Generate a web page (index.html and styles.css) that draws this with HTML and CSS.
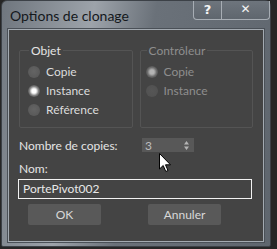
FILE: index.html
```html
<!DOCTYPE html>
<html lang="fr">
<head>
    <meta charset="UTF-8">
    <title>Options de clonage</title>
    <link rel="stylesheet" href="styles.css">
</head>
<body>
    <div class="window">
        <div class="titlebar">
            <div class="title">Options de clonage</div>
            <div class="caption-buttons">
                <div class="cap-btn help">?</div>
                <div class="cap-btn close">&#x2715;</div>
            </div>
        </div>
        <div class="client">
            <div class="groups">
                <fieldset class="group">
                    <legend>Objet</legend>
                    <div class="radio"><span class="dot"></span>Copie</div>
                    <div class="radio"><span class="dot checked"></span>Instance</div>
                    <div class="radio"><span class="dot"></span>Référence</div>
                </fieldset>
                <fieldset class="group disabled">
                    <legend>Contrôleur</legend>
                    <div class="radio"><span class="dot checked"></span>Copie</div>
                    <div class="radio"><span class="dot"></span>Instance</div>
                </fieldset>
            </div>
            <div class="copies-row">
                <span class="label">Nombre de copies:</span>
                <div class="spinner">
                    <span>3</span>
                    <svg width="5" height="9" viewBox="0 0 5 9"><path d="M2.5 0 L5 3.5 H0 Z M0 5.5 H5 L2.5 9 Z" fill="#b4b4b4"/></svg>
                </div>
            </div>
            <div class="label name-label">Nom:</div>
            <div class="name-input">PortePivot002</div>
            <div class="actions">
                <div class="btn">OK</div>
                <div class="btn">Annuler</div>
            </div>
        </div>
        <svg class="cursor" width="13" height="20" viewBox="0 0 13 20">
            <path d="M0.5 0.5 V16 L4.2 12.5 L6.8 18.5 L9 17.5 L6.5 11.8 H11.5 Z" fill="#fff" stroke="#000" stroke-width="1"/>
        </svg>
    </div>
</body>
</html>
```
FILE: styles.css
```css
* {
    box-sizing: border-box;
}

body {
    margin: 0;
    background-color: #262626;
    font-family: Lato, "Noto Sans", sans-serif;
    font-size: 12px;
    height: 249px;
    overflow: hidden;
}

.window {
    position: relative;
    margin-left: 1px;
    width: 270px;
    height: 247px;
    border: 1px solid #3c4147;
    border-radius: 6px 6px 2px 2px;
    background: linear-gradient(100deg, #6f767e 0%, #9da3aa 30%, #6a7179 50%, #5f666e 100%);
    padding: 0 6px 5px 6px;
}

.titlebar {
    display: flex;
    justify-content: space-between;
    height: 28px;
}

.title {
    padding: 6px 0 0 2px;
    font-size: 14px;
    color: #14181c;
}

.caption-buttons {
    display: flex;
    height: 19px;
    margin-right: -6px;
}

.cap-btn {
    height: 19px;
    border: 1px solid #a7adb4;
    border-top: none;
    background: linear-gradient(#6e757d, #5f666e);
    color: #f4f4f4;
    font-weight: bold;
    font-family: "DejaVu Sans", sans-serif;
    text-align: center;
    line-height: 17px;
}

.help {
    width: 29px;
    border-radius: 0 0 0 4px;
    font-size: 13px;
}

.close {
    width: 48px;
    border-left: none;
    border-radius: 0 0 4px 0;
    font-size: 12px;
}

.client {
    height: 213px;
    border: 1px solid #a3aab1;
    box-shadow: 0 0 0 1px #4a5057;
    background-color: #444444;
    color: #dcdcdc;
    padding: 13px 10px 0 10px;
}

.groups {
    display: flex;
    gap: 7px;
}

.group {
    width: 116px;
    height: 85px;
    margin: 0;
    padding: 4px 0 0 8px;
    border: 1px solid #545454;
    border-radius: 2px;
}

.group.disabled {
    padding-left: 5px;
}

.group legend {
    padding: 0 2px;
    margin-left: 1px;
    line-height: 15px;
    color: #e4e4e4;
}

.radio {
    display: flex;
    align-items: center;
    gap: 6px;
    height: 19px;
}

.dot {
    width: 12px;
    height: 12px;
    border-radius: 50%;
    background: radial-gradient(circle at 50% 45%, #646464, #5a5a5a 70%, #4f4f4f);
}

.dot.checked {
    background: radial-gradient(circle, #ffffff 0 2px, #d6d6d6 3px, #858585 4.5px, #5c5c5c 6px);
}

.disabled legend,
.disabled .radio {
    color: #8e8e8e;
}

.disabled .dot {
    background: radial-gradient(circle, #565656, #505050);
}

.disabled .dot.checked {
    background: radial-gradient(circle, #b4b4b4 0 2px, #9c9c9c 3px, #6e6e6e 4.5px, #565656 6px);
}

.copies-row {
    display: flex;
    align-items: center;
    margin-top: 10px;
    height: 14px;
}

.label {
    color: #e4e4e4;
}

.copies-row .label {
    width: 123px;
}

.spinner {
    display: flex;
    justify-content: space-between;
    align-items: center;
    width: 52px;
    height: 14px;
    padding: 0 5px 0 3px;
    background-color: #585858;
    color: #bdbdbd;
}

.name-label {
    margin-top: 10px;
    line-height: 14px;
}

.name-input {
    height: 20px;
    margin: 3px 1px 0 -1px;
    border: 1px solid #f2f2f2;
    padding: 0 0 0 4px;
    line-height: 18px;
    color: #e8e8e8;
}

.actions {
    display: flex;
    gap: 47px;
    margin: 5px 0 0 9px;
}

.btn {
    width: 73px;
    height: 21px;
    border-radius: 2px;
    background-color: #595959;
    color: #d8d8d8;
    text-align: center;
    line-height: 21px;
}

.cursor {
    position: absolute;
    left: 157px;
    top: 152px;
}
```
